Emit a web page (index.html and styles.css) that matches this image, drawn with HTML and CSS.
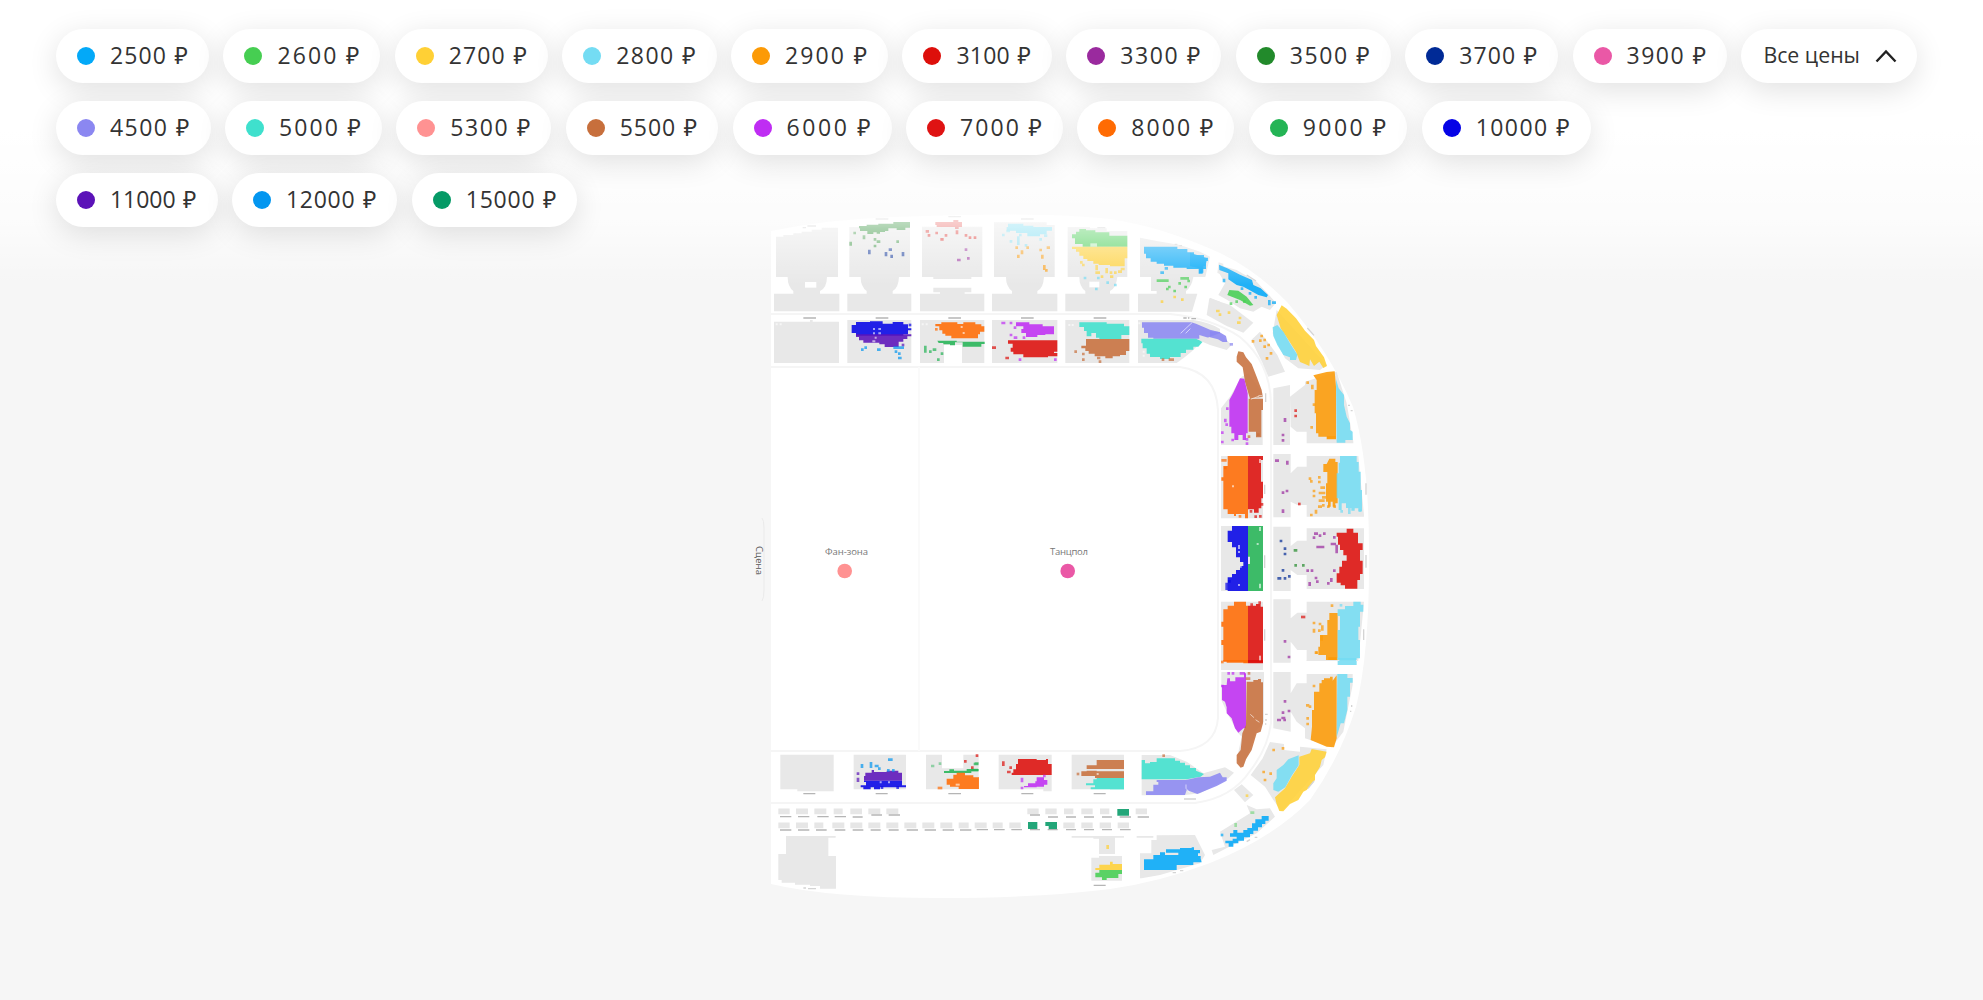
FILE: index.html
```html
<!DOCTYPE html>
<html lang="ru">
<head>
  <meta charset="UTF-8">
  <meta name="viewport" content="width=device-width, initial-scale=1.0">
  <title>Выбор мест</title>
  <link rel="stylesheet" href="styles.css">
</head>
<body>
  <!-- Hall map -->
  <svg class="hall" width="1983" height="1000" viewBox="0 0 1983 1000">
    <path class="floor" d="M771 231Q830 219 893 217Q1040 211 1110 219Q1163 227 1220 253Q1256 270 1287 302Q1330 352 1353 407Q1369 460 1369 550Q1370 650 1356 707Q1340 758 1310 800Q1273 838 1210 863Q1160 882 1110 889Q1040 898 940 898Q830 898 771 884Z"/>
    <path class="line" d="M771 314H1170Q1212 318 1240 337Q1270 362 1271 403V723Q1268 748 1250 771Q1232 798 1195 803H771"/>
    <path class="line" d="M771 367H1180Q1216 372 1218 410V718Q1216 748 1180 751H771"/>
    <path class="line thin" d="M919 367V751"/>

    <!-- Top stands, left -->
    <g transform="translate(750 205) scale(.33333)">
      <path class="seats" d="M78 95H100V90H130V85H155V80H185V74H215V68H264V216H231Q230 250 210 258V266H130V258Q113 245 113 216H78ZM72 266H268V319H72ZM72 350H180V345H188V350H267V474H72Z"/>
      <path class="seats" d="M298 66H480V216H447Q445 250 428 258V266H350V258Q332 245 332 216H298ZM292 266H484V319H292ZM292 345H484V474H292Z"/>
      <path class="seats" d="M516 65H697V216H664V222H550V216H516ZM550 248H664V262H644V266H703V319H510V266H570V262H550ZM510 345H703V474H636V420H582V474H510Z"/>
      <path class="floor" d="M165 231h34v17h-34z"/>
      <path class="p3500" d="M327 63H350V59H385V56H430V51H480V68H466V75H440V70H415V78H405V81H390V86H380V82H370V87H352V78H330V70H327Z"/>
      <path class="dots p3500" d="M314 84h0M342 95v4M375 103h0M384 110h3M375 123h0M443 110h0M302 114v4"/>
      <path class="dots p3700" d="M358 138v6M408 145v5M420 134h2M425 153v2M459 145v5"/>
      <path class="p3100 soft" d="M556 51H610V45H625V51H636V66H626V72H615V66H560V60H556Z"/>
      <path class="dots p3100" d="M531 79h2M537 91h0M560 84h0M575 103h2M588 91h0M621 80v4M648 91h0M660 98h0M675 98h0"/>
      <path class="dots p3300" d="M648 134h0M655 160h0M625 165h3"/>
      <path class="p10000" d="M318 351H360V349H398V356H428V351H460V358H474V370H484V376H474V388H460V392H318V384H305V360H318Z"/>
      <path class="p11000" d="M318 388H484V394H472V402H460V410H446V426H404V418H388V413H340V406H327V396H318Z"/>
      <path class="dots p10000" d="M480 360h0"/>
      <path class="dots p11000" d="M459 420h0"/>
      <path class="gap" d="M372 372h0M388 372h2M372 385h0M388 385h2M377 398h0M370 409h3"/>
      <path class="dots p12000" d="M337 434h0M347 428h0M385 434h3M434 428h24M438 440h0M448 446h0M448 459h3"/>
      <path class="p8000" d="M556 357H574V352H622V357H640V352H676V358H694V364H703V380H690V388H684V400H604V392H586V386H577V376H568V364H556Z"/>
      <path class="dots p8000" d="M559 373h0"/>
      <path class="gap" d="M635 366h0M641 384h0"/>
      <path class="p9000" d="M562 407H620V410H704V417H694V425H638V412H615V421H600V418H580V414H566Z"/>
      <path class="dots p9000" d="M526 426v13M541 440h0M552 434h3M576 446h0M565 464h0"/>
      <path class="gap" d="M518 358h0M530 358h0M80 358h0M92 358h0"/>
      <path class="label" d="M160 339h38M377 339h38M595 339h38"/>
      <path class="label faint" d="M158 68h10M172 63h26M377 42h38M595 35h38"/>
    </g>

    <!-- Top stands, right -->
    <g transform="translate(980 205) scale(.33333)">
      <path class="seats" d="M42 52H200V60H224V216H192Q190 250 172 258V266H232V319H36V266H96V258Q78 245 78 216H42ZM36 345H232V474H36Z"/>
      <path class="seats" d="M263 66H330V70H380V78H442V216H412Q408 250 390 258V266H448V319H256V266H316V258Q298 245 298 216H263ZM256 345H448V474H256Z"/>
      <path class="seats" d="M480 98L530 108L600 120L660 140L690 155L676 216H640Q635 245 618 258V266H652L636 320H474V266H530V258H513V216H480ZM474 345H640Q690 352 720 372V420L668 405Q640 440 590 474H474ZM690 278L720 290V345L684 328ZM716 172L730 176V210L712 204Z"/>
      <path class="floor" d="M328 230h30v17h-30z"/>
      <path class="p2800" d="M84 56H130V62H160V66H216V77H200V88H180V94H142V84H108V77H80V66H84Z"/>
      <path class="dots p2800" d="M70 90h0M83 78h3M93 109h0M115 98v18M121 90h0M138 121h0M182 103h0M196 92h2"/>
      <path class="dots p2900" d="M110 128h0M143 128h0M126 140v4M115 153v2M182 135h0M204 128h2M187 153v4M193 184v7M199 196h0"/>
      <path class="p2600" d="M298 72H318V76H346V82H388V92H442V125H308V117H285V100H276V88H288V80H298Z"/>
      <path class="p2700" d="M276 125H442V160H434V184H390V180H356V176H340V168H322V162H310V152H298V140H288V132H276Z"/>
      <path class="gap big" d="M336 120h10"/>
      <path class="dots p2700" d="M304 172h0M310 180h0M350 184v8M356 203h0M350 203h0M380 193v8M393 203h0M406 203h0M418 200h4M366 215h0M394 215h2M426 192h4"/>
      <path class="dots p2800" d="M315 219h0M355 219h0M383 233h0M406 240h0M349 252h0"/>
      <path class="p2500" d="M492 125H592V132H622V142H642V150H672V158H684V168H678V192H668V206H656V192H620V188H580V182H552V176H530V170H512V160H498V146H492Z"/>
      <path class="dots p2500" d="M558 190h2M545 203h3"/>
      <path class="dots p2600" d="M534 227h28M605 220h18M626 228h0M599 235h0M617 246h0M568 246h0M562 252h0M584 258h0"/>
      <path class="dots p2700" d="M584 276h0M546 290h0M607 284h0M712 318v6"/>
      <path class="p6000" d="M108 352H148V358H188V364H222V388H196V390H172V396H138V384H124V372H130V364H108Z"/>
      <path class="dots p6000" d="M68 354h4M93 354h0M105 368h0M93 390h0M105 398h3M120 464h0M226 464h0M132 398h0"/>
      <path class="p3100" d="M84 406H232V440H222V444H232V454H204V457H130V448H100V440H92V428H98V416H84Z"/>
      <path class="dots p3100" d="M40 428h4M80 459h3"/>
      <path class="p5000" d="M298 352H380V356H432V364H448V390H424V402H358V398H348V384H334V394H320V378H312V366H298Z"/>
      <path class="p5500" d="M318 402H448V438H438V450H420V454H398V460H376V454H344V446H326V438H316V430H304V422H318Z"/>
      <path class="dots p5500" d="M287 440h0M310 447h0M310 464h0M355 459h2M360 470h0"/>
      <path class="gap" d="M268 360h0M278 360h0M478 355h0"/>
      <path class="p4500" d="M486 352H634L648 356L690 374L720 382V408L690 400L658 390V401H520V398H504V384H492V368H486Z"/>
      <path class="p5000" d="M484 401H648L668 410L655 425H640V434H618V444H602V456H570V462H540V456H510V446H500V430H488V415H484Z"/>
      <path class="gap fine" d="M603 384l32 -30M618 384l12 -12"/>
      <path class="gap" d="M491 440h0M491 452h0"/>
      <path class="dots p5500" d="M549 464h0M570 464h8"/>
      <path class="label" d="M123 339h38M341 339h38M610 339h10M624 339h4M634 341h14"/>
      <path class="label faint" d="M123 42h38M352 68h24M584 118h8M598 122h8"/>
    </g>

    <!-- Upper right corner -->
    <g transform="translate(1190 230) scale(.33333)">
      <path class="seats" d="M87 105L140 120L200 155L258 218L240 240L215 230L190 245L150 235L112 210L85 195L105 160L85 125Z"/>
      <path class="seats" d="M58 205L120 225L190 278L160 308L110 288L50 255Z"/>
      <path class="seats" d="M210 305L225 325L262 375L285 425L235 440L218 400L184 330ZM260 240L410 405L390 420L325 415L285 385L248 310Z"/>
      <path class="seats" d="M250 475L300 465V645H250ZM300 500L345 465V455L440 425L470 520L490 635V640H350V605H320L302 590Z"/>
      <path class="seats" d="M88 310L125 345L110 360L60 345L30 332ZM155 440L175 430L218 490V645H93V535L120 500Z"/>
      <path class="p4500" d="M88 306L108 318L112 336L98 336L84 328L60 322V304Z"/>
      <path class="dots p4500" d="M123 343h2"/>
      <path class="p2500" d="M0 68L52 85L46 108H40V128H28V115L0 108ZM87 104L115 116L150 134L186 150L190 165L212 175L234 195L230 202L205 195L178 180L160 170L140 165L115 148V130L88 120Z"/>
      <path class="dots p2500" d="M102 150v3M156 176h0M180 190h0M197 202h0M238 214v8M250 218h4"/>
      <path class="p2600" d="M118 180L145 182L170 200L190 225L180 227L150 210L112 195Z"/>
      <path class="dots p2600" d="M123 221h0M140 215h0M163 215h0"/>
      <path class="dots p2700" d="M82 243h3M90 254h0M117 248h0M150 264h0M145 278h3"/>
      <path class="p2700" d="M275 226L290 236L318 265L345 302L372 330L378 348L402 382L411 408L400 414L388 395L372 408L360 388L358 408L345 402L330 396L318 365L292 325L272 295L260 255Z"/>
      <path class="p2800" d="M248 292L262 285L280 305L300 340L322 374L318 390H300V382L280 375L262 345L250 318Z"/>
      <path class="dots p2900" d="M189 334h0M215 318h0M211 332h0M224 330h0M224 350h0M236 345h0M243 370h0M231 385h0"/>
      <path class="p5500" d="M145 364L160 367L168 382L185 402L200 440L215 480L218 500L180 506L165 455L158 412L140 395V380ZM176 506H219V540H214V622H198V605H176Z"/>
      <path class="p6000" d="M150 445L163 446L173 490V610H168V630H158V615H145V630H133V610H124V590H118V510L130 488Z"/>
      <path class="dots p6000" d="M112 536h0M106 570v3M110 584h0M97 608h0M97 636h0M128 630h0M171 641h0M171 628h0"/>
      <path class="dots p5500" d="M177 620h0M205 614h0"/>
      <path class="gap fine" d="M184 507l22 -8M207 497h8"/>
      <path class="p2900" d="M370 436L410 426L434 424L438 470V628H410V620H385V610H378V550H374V480H380V450Z"/>
      <path class="dots p2900" d="M353 458h0M367 468v6M372 524h0M365 592h0M415 622h18"/>
      <path class="p2800" d="M438 448L446 475L462 495V525L470 560L480 580V600L488 605V630H466V638H440Z"/>
      <path class="dots p3100" d="M317 542h0M317 558h0"/>
      <path class="dots p3300" d="M285 568v4M279 615h0M279 631h0"/>
      <path class="label faint" d="M170 135l28 18M352 294l20 22M474 526h6M482 542h6M227 490v26"/>
    </g>

    <!-- Right stand -->
    <g transform="translate(1190 440) scale(.33333)">
      <path class="seats" d="M93 48H219V235H93ZM93 258H219V453H93ZM93 485H219V690H93Z"/>
      <path class="seats" d="M250 42H302V100L322 80H350V48H505L522 225V230H350V195H322L302 185V232H250Z"/>
      <path class="seats" d="M250 260H302V318L322 302H350V265H522V447H350V405H322L302 390V453H250Z"/>
      <path class="seats" d="M250 478H302V535L322 518H350V485H522L505 662H350V630H322L302 605V660H250Z"/>
      <path class="p8000" d="M113 48H174V235H165V222H138V228H132V222H113V208H100V122H94V112H100V78H113Z"/>
      <path class="p3100" d="M174 48H219V60H213V125H219V175H214V205H206V218H192V208H174Z"/>
      <path class="dots p8000" d="M98 61h8M106 84h0M150 229h0"/>
      <path class="dots p3100" d="M216 193h0M197 230h0M211 229h0M183 214h0"/>
      <path class="p10000" d="M126 258H174V453H113V412H126V402H138V390H150V378H160V366H150V352H138V322H126V306H113V272H126Z"/>
      <path class="p9000" d="M174 258H219V453H174V372H180V350H174Z"/>
      <path class="dots p10000" d="M110 432v14M118 424h0"/>
      <path class="gap" d="M147 318v6M147 336h0M147 435h0M152 380h0M210 264v6M203 312h0M210 434v8M129 139h0M210 60v6"/>
      <path class="p8000" d="M132 485H168V497H174V670H160V665H100V615H94V600H100V560H94V545H100V508H113V497H132Z"/>
      <path class="p3100" d="M174 497H198V492H212V500H219V670H174Z"/>
      <path class="dots p3100" d="M209 488h0M185 494h0"/>
      <path class="p2900" d="M418 56H436V66H443V190H436V200H428V185H422V200H414V185H408V130H412V96H400V72H410Z"/>
      <path class="dots p2900" d="M360 116h0M364 124h0M388 112h0M388 126h0M372 153h0M372 168h0M395 143h6M390 159h12M400 172h4M390 182h10M400 196h0M378 213v4M364 225h0M415 200h0M434 200h0M388 200h4"/>
      <path class="p2800" d="M450 48H500V66H506V95H512V150H516V214H505V205H494V212H484V204H468V190H455V210H446V175H440V100H446V68H450Z"/>
      <path class="dots p2800" d="M455 214h0M478 208v10M510 212h0"/>
      <path class="dots p3300" d="M259 62h4M292 66v4M279 158h0M291 153h0M279 212v3"/>
      <path class="dots p3100" d="M328 192h0"/>
      <path class="dots p3700" d="M273 303h0M285 326h0M285 342h0M279 391h0M266 415h4M285 415h0M298 409h0"/>
      <path class="dots p3500" d="M315 331h3M317 376h0M340 376h0"/>
      <path class="dots p3300" d="M376 281h4M372 293h0M390 287h0M403 281h0M383 321h16M433 292h0M426 312h8M440 318v18M353 392h0M366 392h0M433 392h0M378 414h0M382 425h0M359 430v4M415 430h0M424 418v4"/>
      <path class="p3100" d="M470 266H490V278H504V310H518V330H510V362H518V402H510V420H502V446H465V436H452V428H440V400H448V380H456V362H470V346H460V330H450V314H444V290H440V278H470Z"/>
      <path class="p2900" d="M418 519H443V660H408V645H385V620H390V585H412V540H418Z"/>
      <path class="dots p2900" d="M426 497h0M372 549h0M372 570v4M390 552h0M397 560v8M388 572h0M395 590v8M380 638h0"/>
      <path class="p2800" d="M490 485H512V494H520V515H510V560H505V600H510V655H500V675H443V570H450V528H443V508H465V498H490Z"/>
      <path class="dots p2800" d="M453 496h0"/>
      <path class="dots p3300" d="M285 604h0M297 651h0"/>
      <path class="dots p3100" d="M337 531h5"/>
      <path class="label faint" d="M224 134v28M224 346v38M224 568v34M528 130v34M528 345v38M521 568v32"/>
    </g>

    <!-- Lower right corner -->
    <g transform="translate(1110 650) scale(.33333)">
      <path class="seats" d="M490 30H542V38H490ZM590 30H744V33H590Z"/>
      <path class="seats" d="M334 66H462V215L440 240L400 350L380 330L395 260L382 246L350 185L334 150Z"/>
      <path class="seats" d="M490 66H542V245L490 235ZM542 130L560 100H590V72H728V105L700 245L665 292L585 265V235L560 215L542 185Z"/>
      <path class="seats" d="M480 276L522 282V300L570 305V290L650 298L640 345L515 483L490 450L465 410L422 375L458 325Z"/>
      <path class="seats" d="M395 403L430 435L405 457L372 420ZM410 465L440 478L480 475L495 500L440 550L355 592L310 615L305 600L345 590L330 545L420 490Z"/>
      <path class="seats" d="M95 315H180L230 335L280 370L345 352L372 368L355 385L270 430L220 436H95Z"/>
      <path class="seats" d="M80 558H130V563H80ZM140 556L255 555L285 615L270 640L150 675L95 685H90V610H124V570H140Z"/>
      <path class="p8000" d="M340 30H414V38H350V34H340Z"/>
      <path class="p3100" d="M414 30H459V38H414Z"/>
      <path class="gap" d="M450 20v8"/>
      <path class="dots p8000" d="M337 36h0"/>
      <path class="p2900" d="M655 22H680V30H655ZM660 80H668V92L680 76V265L672 292L650 290L602 270L606 230V180H612V125H628V100H635V90H642V85H660Z"/>
      <path class="p2800" d="M682 24H738V33H688V28H682ZM682 72H712V84H728V98H720V140H712V180L702 220H692L680 262Z"/>
      <path class="dots p2900" d="M618 8h0M612 108h0M592 166h2M600 170h0M593 205h0M593 222h0M491 300h0M519 295h0M461 366h0M482 371h0M465 390h0"/>
      <path class="dots p3300" d="M525 154h0M519 188h0M537 183h0M505 210h4M518 204h4M524 210h0"/>
      <path class="p6000" d="M352 85H360V94H376V82H402V70H408V235H400L385 248L375 235L365 205L350 190V172L345 155L336 150V105H350Z"/>
      <path class="dots p6000" d="M356 70h0M369 70h0M393 70h8M337 108h0"/>
      <path class="p5500" d="M410 95H430V90H444V87H453V97H459V220L452 245L440 250L425 300L408 328L400 350L392 353L380 340V315L392 300L397 250L408 225Z"/>
      <path class="dots p5500" d="M417 70h0M411 86h6"/>
      <path class="gap fine" d="M422 194l9 8M438 210l9 6"/>
      <path class="p2700" d="M605 297L650 305L645 322L635 330L630 350L615 375V390L590 420L580 425L565 450L540 462L520 484L508 483L500 463L495 442L525 415L545 380L568 345V320L600 310Z"/>
      <path class="p2800" d="M566 316V346L546 376L526 412L505 425L490 420V400L500 385V360L520 345L535 328Z"/>
      <path class="p5000" d="M95 330H105V340H120V336H140V325H195V332H210V338H225V346H240V354H258V362L282 372L272 380L230 388H95ZM0 384H42V418H0Z"/>
      <path class="p5500" d="M0 330H42V357H0ZM0 364H8V370H42V384H0Z"/>
      <path class="dots p5500" d="M161 317h0"/>
      <path class="p4500" d="M140 390H228L265 382L300 380L330 368L338 382H350V392L320 408L262 432L230 420L225 435H108V424H130V404H145V396H140Z"/>
      <path class="gap fine" d="M228 405v10l10 12"/>
      <path class="dots p2700" d="M411 437h0"/>
      <path class="dots p2600 pale" d="M377 523v4M425 488h4"/>
      <path class="p2500" d="M455 498H476V512H466V522H456V532H444V542H430V552H420V562H402V572H385V580H370V590H356V580H346V572H368V566H380V560H360V550H370V540H382V548H400V540H412V534H426V520H436V508H455Z"/>
      <path class="dots p2500" d="M336 555h0"/>
      <path class="p2500" d="M245 592H252V600H270V610H264V618H272V626L275 637H250V645H200V660H102V628H130V615H150V607H165V615H205V608H168V598H210V594H245Z"/>
      <path class="label faint" d="M222 447h36M465 193h8M465 210h6M465 222h4M720 184h4M725 165v6M594 415l18 -22M410 575l10 -6M434 562h8M188 668h10M210 662h10"/>
    </g>

    <!-- Bottom stands, left -->
    <g transform="translate(740 740) scale(.33333)">
      <path class="seats" d="M121 44H281V154H172V148H121ZM341 44H498V148H341ZM558 44H606V85H670V44H716V148H558Z"/>
      <path class="seats" d="M138 288H287V293H265V348H288V446H240V438H210V434H165V428H125V420H115V342H138Z"/>
      <path class="p11000" d="M395 90H402V96H440V92H475V98H486V122H372V108H376V98H395Z"/>
      <path class="p10000" d="M372 122H486V136H498V142H420V148H402V142H392V148H370V142H362V136H378V126H372Z"/>
      <path class="dots p10000" d="M426 143h0M473 143h0"/>
      <path class="dots p11000" d="M354 101h0M354 117v5"/>
      <path class="dots p12000" d="M366 76v4M393 70v10M408 78h4M418 86h0M448 59h6M445 91h0M460 91h0"/>
      <path class="gap" d="M422 127h0M447 127h0"/>
      <path class="p9000" d="M612 93H628V88H642V92H680V87H716V94H694V99H612Z"/>
      <path class="dots p9000 pale" d="M577 78h2M600 71h0M708 70h4"/>
      <path class="dots p3100" d="M676 64h0M711 47h0M697 83h0"/>
      <path class="p8000" d="M650 98H675V106H700V112H716V147H656V140H630V134H620V116H640V104H650Z"/>
      <path class="dots p8000" d="M597 144h6"/>
      <path class="gap" d="M650 134h6"/>
      <path class="boxes" d="M115 214h34M168 214h36M223 214h36M281 214h27M331 214h35M385 214h36M439 214h36M115 256h34M168 256h36M223 256h27M277 256h36M331 256h36M385 256h36M439 256h36M493 256h36M547 256h36M601 256h36M656 256h30M704 256h36"/>
      <path class="label" d="M190 161h36M407 161h36M625 161h38M120 230h34M174 230h34M232 230h34M284 230h34M338 231h30M394 225h32M446 225h34M120 270h34M174 270h34M228 270h32M284 270h32M338 270h32M392 270h30M446 270h30M500 270h34M554 270h34M608 270h34M660 270h34"/>
      <path class="label faint" d="M190 444h8M204 446h24"/>
    </g>

    <!-- Bottom stands, right -->
    <g transform="translate(970 740) scale(.33333)">
      <path class="seats" d="M86 44H245V154H220V148H86ZM305 44H462V148H305Z"/>
      <path class="seats" d="M305 288H462V293H435V342H387V296H370V293H305ZM364 353H387V348H456V422H364Z"/>
      <path class="p3100" d="M144 57H200V60H228V57H234V72H245V105H125V98H130V88H138V72H144Z"/>
      <path class="dots p3100" d="M100 68v6M122 83h0M115 96h3"/>
      <path class="dots p9000" d="M15 72h6M8 90h12"/>
      <path class="p8000" d="M24 112H26V147H24Z"/>
      <path class="p6000" d="M200 112H222V120H232V134H222V140H200V142H162V138H174V130H196V124H200Z"/>
      <path class="dots p6000" d="M156 117v6M156 144h0M223 108h0"/>
      <path class="p5500" d="M380 60H462V87H350V76H380ZM350 92H380V94H462V114H375V108H334V94H350Z"/>
      <path class="dots p5500" d="M324 102h0"/>
      <path class="gap" d="M383 102h0"/>
      <path class="p5000" d="M370 118H380V114H462V148H362V142H375V136H348V130H370Z"/>
      <path class="p2700" d="M420 365H428V372H456V390H376V384H388V374H420Z"/>
      <path class="p2600" d="M388 390H456V402H445V414H410V420H396V412H376V398H388Z"/>
      <path class="dots p2700" d="M413 319v4"/>
      <path class="boxes" d="M172 214h34M226 214h34M282 214h28M334 214h34M390 214h28M497 214h34M68 256h30M118 256h34M280 256h34M334 256h34M389 256h34M443 256h34"/>
      <path class="p15000" d="M442 207h35v20h-35zM174 246h28v21h-28zM226 246h35v22H236v-10H226z"/>
      <path class="label" d="M154 161h36M371 161h36M180 225h30M234 231h30M288 231h30M342 231h30M396 231h30M449 231h34M503 231h34M20 269h34M72 269h32M124 269h32M180 269h30M233 269h30M288 269h30M342 269h30M396 269h30M450 269h32M371 436h36"/>
    </g>

    <!-- Standing zones -->
    <path class="line stage" d="M762 518Q764 520 764 528V590Q764 598 762 601"/>
    <text class="zone stage-name" transform="translate(756 546) rotate(90)" textLength="29">Сцена</text>
    <text class="zone" x="825" y="555" textLength="43">Фан-зона</text>
    <circle class="p5300" cx="844.7" cy="571" r="7.3"/>
    <text class="zone" x="1050" y="555" textLength="38">Танцпол</text>
    <circle class="p3900" cx="1067.7" cy="571" r="7.3"/>
  </svg>

  <!-- Price filter -->
  <div class="prices">
    <div class="row" id="row-1"></div>
    <div class="row" id="row-2"></div>
    <div class="row" id="row-3"></div>
  </div>

  <script>
    // price, chip width
    const rows = [
      [[2500, 153], [2600, 157], [2700, 153], [2800, 154.5], [2900, 157], [3100, 149.5], [3300, 155], [3500, 155], [3700, 153], [3900, 154.5]],
      [[4500, 154.5], [5000, 157], [5300, 155], [5500, 152.5], [6000, 159], [7000, 157], [8000, 157], [9000, 158.5], [10000, 169]],
      [[11000, 161.5], [12000, 165.5], [15000, 165.5]]
    ];
    const chipExtra = 96; // paddings, dot and currency sign
    const digitWidth = 13.15;

    rows.forEach((row, i) => {
      const rowDiv = document.getElementById(`row-${i + 1}`);
      row.forEach(([price, width]) => {
        const chip = document.createElement('button');
        const spacing = (width - chipExtra) / String(price).length - digitWidth;
        chip.className = 'chip';
        chip.style.width = `${width}px`;
        chip.innerHTML = `<span class="dot p${price}"></span><span class="price" style="letter-spacing: ${spacing.toFixed(2)}px">${price}</span><span class="rub">₽</span>`;
        rowDiv.appendChild(chip);
      });
    });

    const all = document.createElement('button');
    all.className = 'chip all';
    all.innerHTML = '<span class="price">Все цены</span> <svg class="arrow" width="22" height="14" viewBox="0 0 22 14"><path d="M1.5 12.5L11 2.5L20.5 12.5"/></svg>';
    document.getElementById('row-1').appendChild(all);
  </script>
</body>
</html>
```

FILE: styles.css
```css
body {
  margin: 0;
  height: 1000px;
  position: relative;
  overflow: hidden;
  background-color: #f6f6f6;
  font-family: "Open Sans", "Noto Sans", sans-serif;
}

/* Price filter lies over the map and fades it out */
.prices {
  position: absolute;
  top: 0;
  left: 0;
  right: 0;
  height: 285px;
  box-sizing: border-box;
  padding: 29px 56px 0;
  display: flex;
  flex-direction: column;
  gap: 18px;
  background: linear-gradient(#fff 130px, rgba(255, 255, 255, 0.65) 222px, rgba(255, 255, 255, 0.36) 250px, rgba(255, 255, 255, 0));
}
.row {
  display: flex;
  gap: 14.4px;
}
.chip {
  flex: none;
  box-sizing: border-box;
  height: 54px;
  padding: 0 21px;
  border: none;
  border-radius: 27px;
  background-color: #fff;
  box-shadow: 0 7px 30px rgba(0, 0, 0, 0.12);
  display: flex;
  align-items: center;
  font-family: inherit;
  font-size: 23px;
  line-height: 30px;
  color: #333;
  cursor: pointer;
}
.dot {
  width: 18px;
  height: 18px;
  margin-right: 15px;
  border-radius: 50%;
  background-color: currentColor;
}
.price,
.rub {
  padding-bottom: 2px;
}
.rub {
  margin-left: auto;
}
.all {
  width: 176px;
  padding: 0 20px 0 22px;
  justify-content: space-between;
  font-size: 21.3px;
}
.arrow path {
  fill: none;
  stroke: #222;
  stroke-width: 2.4;
}

/* Map */
.hall {
  display: block;
}
.hall path,
.hall circle {
  fill: currentColor;
}
.hall g path[class^="p"] {
  opacity: 0.88;
}
.hall .floor {
  fill: #fff;
}
.hall .seats {
  fill: #e8e8e8;
}
.hall .line {
  fill: none;
  stroke: #f5f5f5;
  stroke-width: 2;
}
.hall .thin {
  stroke: #fafafa;
}
.hall .stage {
  stroke: #eaeaea;
  stroke-width: 1;
}
.hall .dots {
  fill: none;
  stroke: currentColor;
  stroke-width: 8;
  stroke-linecap: square;
  opacity: 0.7;
}
.hall .pale {
  opacity: 0.45;
}
.hall g .soft[class^="p"] {
  opacity: 0.6;
}
.hall .gap {
  fill: none;
  stroke: #fff;
  stroke-width: 6;
  stroke-linecap: square;
  opacity: 0.6;
}
.hall .fine {
  stroke-width: 3;
}
.hall .big {
  stroke-width: 10;
}
.hall .boxes {
  fill: none;
  stroke: #e6e6e6;
  stroke-width: 17;
}
.hall .label {
  fill: none;
  stroke: #b5b5b5;
  stroke-width: 4;
}
.hall .faint {
  stroke: #d4d4d4;
}
.zone {
  font-size: 9.5px;
  fill: #777;
}
.stage-name {
  fill: #555;
}

/* Price colours */
.p2500 { color: #03a9f8; }
.p2600 { color: #46ce52; }
.p2700 { color: #ffd035; }
.p2800 { color: #74dcf3; }
.p2900 { color: #fc9a06; }
.p3100 { color: #dd0f0b; }
.p3300 { color: #9a2a9e; }
.p3500 { color: #228a2b; }
.p3700 { color: #002a96; }
.p3900 { color: #ea58a6; }
.p4500 { color: #8b87f1; }
.p5000 { color: #3fe0cd; }
.p5300 { color: #ff9292; }
.p5500 { color: #c76f3c; }
.p6000 { color: #bf2df3; }
.p7000 { color: #df1313; }
.p8000 { color: #ff6b03; }
.p9000 { color: #24b455; }
.p10000 { color: #0503e6; }
.p11000 { color: #5b12b8; }
.p12000 { color: #0396f0; }
.p15000 { color: #059a66; }
```
